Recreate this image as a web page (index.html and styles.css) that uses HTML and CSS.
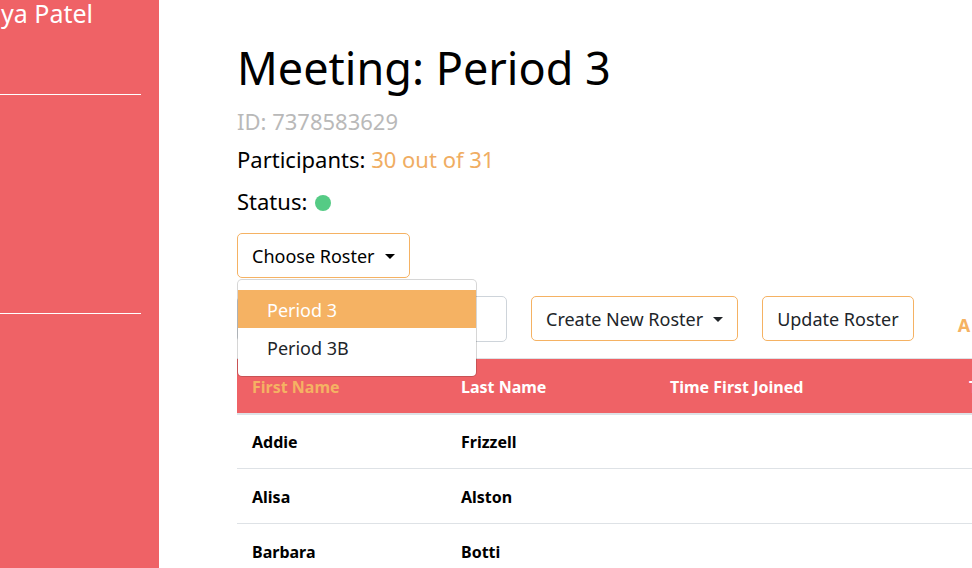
FILE: index.html
```html
<!DOCTYPE html>
<html lang="en">
<head>
<meta charset="utf-8">
<title>Meeting: Period 3</title>
<link rel="stylesheet" href="styles.css">
</head>
<body>
<div class="layout">
  <aside class="sidebar">
    <div class="user">ya Patel</div>
    <div class="sidebar-group"></div>
  </aside>
  <main class="content">
    <h1 class="title">Meeting: Period 3</h1>
    <p class="meeting-id">ID: 7378583629</p>
    <p class="participants">Participants: <span class="count">30 out of 31</span></p>
    <p class="status">Status: <span class="dot"></span></p>
    <div class="roster-picker">
      <button class="btn caret" type="button">Choose Roster</button>
      <div class="menu">
        <button class="menu-item active" type="button">Period 3</button>
        <button class="menu-item" type="button">Period 3B</button>
      </div>
    </div>
    <div class="toolbar">
      <input class="search" type="text" aria-label="Search">
      <button class="btn caret" type="button">Create New Roster</button>
      <button class="btn" type="button">Update Roster</button>
      <a class="link" href="#">A</a>
    </div>
    <table class="roster">
      <colgroup><col class="name"><col class="name"><col class="time"><col class="time"></colgroup>
      <thead>
        <tr><th class="sorted">First Name</th><th>Last Name</th><th>Time First Joined</th><th>T</th></tr>
      </thead>
      <tbody>
        <tr><td>Addie</td><td>Frizzell</td><td></td><td></td></tr>
        <tr><td>Alisa</td><td>Alston</td><td></td><td></td></tr>
        <tr><td>Barbara</td><td>Botti</td><td></td><td></td></tr>
      </tbody>
    </table>
  </main>
</div>
</body>
</html>
```
FILE: styles.css
```css
* { box-sizing: border-box; }
body {
  margin: 0;
  background: #fff;
  color: #000;
  font-family: "Segoe UI", "Noto Sans", "Open Sans", sans-serif;
  overflow: hidden;
}
.layout { display: flex; height: 100vh; }
.sidebar {
  flex: 0 0 159px;
  padding-right: 18px;
  overflow: hidden;
  background: #ef6266;
  color: #fff;
}
.user {
  height: 95px;
  padding-right: 48px;
  border-bottom: 1px solid #fff;
  font-size: 25px;
  line-height: 26px;
  text-align: right;
  white-space: nowrap;
}
.sidebar-group { height: 219px; border-bottom: 1px solid #fff; }
.content {
  flex: 1;
  min-width: 0;
  padding: 38px 0 0 78px;
  overflow: hidden;
}
.title { margin: 0; font-size: 45px; font-weight: 400; line-height: 60px; }
p { margin: 0; line-height: 38px; }
.meeting-id { padding-top: 4px; color: #b9b9b9; font-size: 22px; }
.participants { font-size: 22px; }
.count { color: #f0ad62; }
.status { padding-top: 4px; font-size: 22px; }
.dot {
  display: inline-block;
  width: 16px;
  height: 16px;
  margin-left: 2px;
  border-radius: 50%;
  background: #55cb85;
  vertical-align: -1px;
}
.roster-picker { position: relative; margin-top: 13px; }
.btn {
  display: flex;
  align-items: center;
  height: 45px;
  padding: 1px 14px 0;
  border: 1px solid #f5b263;
  border-radius: 5px;
  background: #fff;
  color: #212529;
  font-family: inherit;
  font-size: 18px;
  white-space: nowrap;
}
.roster-picker .btn { color: #000; }
.caret::after {
  content: "";
  margin-left: 10px;
  border-top: 5px solid;
  border-right: 5px solid transparent;
  border-left: 5px solid transparent;
}
.menu {
  position: absolute;
  z-index: 1;
  top: 46px;
  left: 0;
  width: 240px;
  padding: 10px 0;
  border: 1px solid rgba(0, 0, 0, 0.16);
  border-radius: 5px;
  background: #fff;
  background-clip: padding-box;
}
.menu-item {
  display: block;
  width: 100%;
  height: 38px;
  padding: 2px 29px 0;
  border: 0;
  background: #fff;
  color: #212529;
  font-family: inherit;
  font-size: 18px;
  text-align: left;
}
.menu-item.active { background: #f5b263; color: #fff; }
.toolbar { display: flex; gap: 24px; margin-top: 18px; }
.search {
  width: 270px;
  height: 46px;
  padding: 0 14px;
  border: 1px solid #ced4da;
  border-radius: 5px;
  font-family: inherit;
  font-size: 18px;
}
.link {
  margin-left: 20px;
  color: #f5b263;
  font-size: 18px;
  font-weight: 700;
  line-height: 58px;
  text-decoration: none;
}
.roster {
  width: 1016px;
  margin-top: 4px;
  border-collapse: collapse;
  table-layout: fixed;
  font-size: 16px;
  font-weight: 700;
}
.name { width: 209px; }
.time { width: 299px; }
.roster th, .roster td {
  height: 55px;
  padding: 2px 14px 0 15px;
  border-top: 1px solid #dee2e6;
  text-align: left;
}
.roster th {
  border-bottom: 2px solid #dee2e6;
  background: #ef6266;
  color: #fff;
}
.roster .sorted { color: #f5b263; }
```
